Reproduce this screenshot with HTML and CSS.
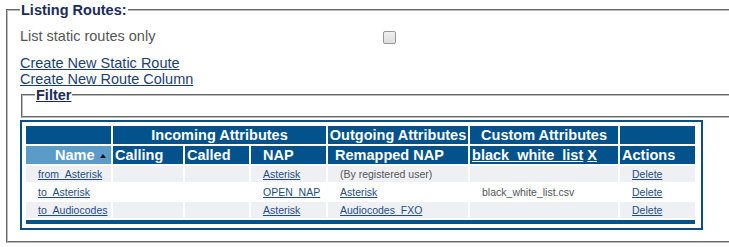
FILE: index.html
```html
<!doctype html>
<html>
<head>
<meta charset="UTF-8">
<title>Listing Routes</title>
<link rel="stylesheet" href="styles.css">
</head>
<body>
<fieldset class="routes">
	<legend class="routes-title">Listing Routes:</legend>
	<div class="static-row">
		<span class="static-label">List static routes only</span>
		<input type="checkbox" class="chk">
	</div>
	<div class="create-links">
		<a href="#">Create New Static Route</a><br>
		<a href="#">Create New Route Column</a>
	</div>
	<fieldset class="filter">
		<legend class="filter-title"><a href="#">Filter</a></legend>
	</fieldset>
	<div class="table-box">
		<table class="routes-table">
			<colgroup>
				<col class="c-name">
				<col class="c-calling">
				<col class="c-called">
				<col class="c-nap">
				<col class="c-remap">
				<col class="c-custom">
				<col class="c-actions">
			</colgroup>
			<thead>
				<tr class="group-row">
					<th></th>
					<th colspan="3">Incoming Attributes</th>
					<th>Outgoing Attributes</th>
					<th>Custom Attributes</th>
					<th></th>
				</tr>
				<tr class="head-row">
					<th class="sorted">Name<span class="sort-up"></span></th>
					<th>Calling</th>
					<th>Called</th>
					<th class="pad-nap">NAP</th>
					<th class="pad-remap">Remapped NAP</th>
					<th><a href="#">black_white_list</a> <a href="#">X</a></th>
					<th>Actions</th>
				</tr>
			</thead>
			<tbody>
				<tr class="odd">
					<td><a href="#">from_Asterisk</a></td>
					<td></td>
					<td></td>
					<td><a href="#">Asterisk</a></td>
					<td class="muted">(By registered user)</td>
					<td></td>
					<td><a href="#">Delete</a></td>
				</tr>
				<tr class="even">
					<td><a href="#">to_Asterisk</a></td>
					<td></td>
					<td></td>
					<td><a href="#">OPEN_NAP</a></td>
					<td><a href="#">Asterisk</a></td>
					<td class="muted">black_white_list.csv</td>
					<td><a href="#">Delete</a></td>
				</tr>
				<tr class="odd">
					<td><a href="#">to_Audiocodes</a></td>
					<td></td>
					<td></td>
					<td><a href="#">Asterisk</a></td>
					<td><a href="#">Audiocodes_FXO</a></td>
					<td></td>
					<td><a href="#">Delete</a></td>
				</tr>
			</tbody>
			<tfoot>
				<tr><td colspan="7" class="foot-bar"></td></tr>
			</tfoot>
		</table>
	</div>
</fieldset>
</body>
</html>
```
FILE: styles.css
```css
body{margin:0;font-family:"Liberation Sans",Arial,sans-serif;font-size:14.5px;color:#555;background:#fff;}
a{color:#1c3f73;}

.routes{box-sizing:border-box;width:723px;margin:2px 0 0 6px;padding:10px 0 11px 12px;border:2px groove #bbb;border-right:none;}
.routes-title{padding:0 1px;line-height:16px;font-weight:bold;color:#1b2b5a;}

.static-row{display:flex;align-items:center;height:16px;line-height:16px;}
.static-label{width:363px;}
.chk{appearance:none;-webkit-appearance:none;width:13px;height:13px;margin:2px 0 0 0;border:1px solid #999;border-radius:2px;background:linear-gradient(#f0f0f0,#dedede);box-sizing:border-box;}

.create-links{margin-top:11px;line-height:16px;}

.filter{margin:0 0 0 1px;padding:0 0 13px 12px;border:2px groove #bbb;border-right:none;}
.filter-title{padding:0 1px;line-height:16px;font-weight:bold;}
.filter-title a{color:#1b2b5a;}

.table-box{width:673px;margin-top:2px;padding:2px 4px 2px 2px;border:2px solid #0b4f86;}
.routes-table{width:673px;table-layout:fixed;border-collapse:separate;border-spacing:2px;}
.c-name{width:85px;}
.c-calling{width:70px;}
.c-called{width:64px;}
.c-nap{width:75px;}
.c-remap{width:140px;}
.c-custom{width:148px;}
.c-actions{width:75px;}

.routes-table th{height:18px;padding:0 0 0 2px;line-height:18px;background:#03528b;color:#fff;font-weight:bold;text-align:left;white-space:nowrap;overflow:hidden;}
.routes-table .group-row th{text-align:center;padding:0;}
.routes-table th a{color:#fff;}
.routes-table th.sorted{background:#5b9bc8;padding-left:29px;}
.sort-up{display:inline-block;margin-left:5px;width:0;height:0;border-left:3px solid transparent;border-right:3px solid transparent;border-bottom:4px solid #111;vertical-align:2px;}
.routes-table th.pad-nap{padding-left:12px;}
.routes-table th.pad-remap{padding-left:7px;}

.routes-table td{height:16px;padding:0 0 0 12px;line-height:16px;font-size:10.5px;white-space:nowrap;}
.routes-table td a{color:#1f4c86;}
.routes-table .odd td{background:#eff0f4;}
.routes-table .even td{background:#fff;}
.routes-table td.muted{color:#555;}
.routes-table td.foot-bar{height:4px;padding:0;line-height:0;background:#03528b;}
```
